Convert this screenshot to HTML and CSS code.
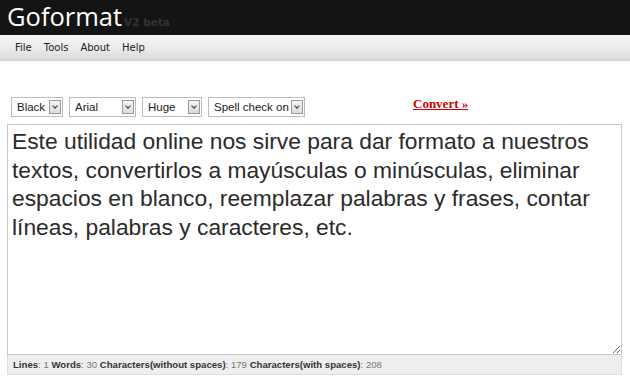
FILE: index.html
```html
<!DOCTYPE html>
<html lang="en">
<head>
    <meta charset="UTF-8">
    <title>Goformat</title>
    <link rel="stylesheet" href="styles.css">
</head>
<body>
    <div class="header">
        <span class="logo">Goformat</span>
        <span class="version">V2 beta</span>
    </div>

    <div class="menu">
        <a href="#">File</a>
        <a href="#">Tools</a>
        <a href="#">About</a>
        <a href="#">Help</a>
    </div>

    <div class="main">
        <div class="toolbar">
            <div class="select sel-color"><span>Black</span><span class="arrow"></span></div>
            <div class="select sel-font"><span>Arial</span><span class="arrow"></span></div>
            <div class="select sel-size"><span>Huge</span><span class="arrow"></span></div>
            <div class="select sel-spell"><span>Spell check on</span><span class="arrow"></span></div>
            <a href="#" class="convert">Convert &raquo;</a>
        </div>

        <textarea class="editor" spellcheck="false">Este utilidad online nos sirve para dar formato a nuestros textos, convertirlos a mayúsculas o minúsculas, eliminar espacios en blanco, reemplazar palabras y frases, contar líneas, palabras y caracteres, etc.</textarea>

        <div class="status">
            <b>Lines</b>: <span>1</span>
            <b>Words</b>: <span>30</span>
            <b>Characters(without spaces)</b>: <span>179</span>
            <b>Characters(with spaces)</b>: <span>208</span>
        </div>
    </div>
</body>
</html>
```

FILE: styles.css
```css
body {
    margin: 0;
    font-family: 'Liberation Sans', Arial, sans-serif;
    background: #fff;
    color: #333;
}

/* Header */
.header {
    height: 35px;
    background-color: #141414;
    padding-left: 7px;
    display: flex;
    align-items: flex-end;
    box-sizing: border-box;
    padding-bottom: 4px;
}

.logo {
    font-family: 'Open Sans', 'Segoe UI', sans-serif;
    font-size: 25.5px;
    line-height: 29px;
    color: #fff;
}

.version {
    font-family: 'DejaVu Sans', Verdana, sans-serif;
    font-size: 10.5px;
    font-weight: bold;
    color: #333;
    margin-left: 2px;
    margin-bottom: 3px;
}

/* Menu */
.menu {
    height: 26px;
    background: linear-gradient(to bottom, #f6f6f6, #e9e9e9 60%, #d9d9d9);
    border-bottom: 1px solid #d0d0d0;
    box-sizing: border-box;
    display: flex;
    align-items: center;
    padding-left: 15px;
    gap: 12px;
}

.menu a {
    font-family: 'DejaVu Sans', Tahoma, sans-serif;
    font-size: 10px;
    color: #222;
    text-decoration: none;
}

/* Toolbar */
.main {
    padding: 0 8px 0 7px;
}

.toolbar {
    display: flex;
    align-items: center;
    gap: 6px;
    margin-top: 36px;
    padding-left: 4px;
    height: 20px;
}

.select {
    height: 20px;
    box-sizing: border-box;
    border: 1px solid #bdbdbd;
    background: #fff;
    display: flex;
    align-items: center;
    justify-content: space-between;
    padding: 0 1px 0 5px;
    font-size: 11.5px;
    color: #222;
    white-space: nowrap;
}

.sel-color { width: 52px; }
.sel-font { width: 67px; }
.sel-size { width: 60px; }
.sel-spell { width: 97px; }

.arrow {
    flex-shrink: 0;
    width: 12px;
    height: 14px;
    box-sizing: border-box;
    border: 1px solid #9a9a9a;
    background: linear-gradient(to bottom, #f4f4f4, #dcdcdc);
    position: relative;
}

.arrow::after {
    content: "";
    position: absolute;
    left: 3px;
    top: 3px;
    width: 3px;
    height: 3px;
    border-right: 1.5px solid #333;
    border-bottom: 1.5px solid #333;
    transform: rotate(45deg);
}

.convert {
    margin-left: 102px;
    margin-top: -6px;
    font-family: 'Liberation Serif', 'Times New Roman', serif;
    font-size: 13px;
    font-weight: bold;
    color: #c00;
    white-space: nowrap;
}

/* Editor */
.editor {
    display: block;
    width: 100%;
    height: 231px;
    margin-top: 7px;
    box-sizing: border-box;
    border: 1px solid #c8c8c8;
    padding: 2px 4px;
    font-family: 'Liberation Sans', Arial, sans-serif;
    font-size: 22.8px;
    line-height: 28.5px;
    color: #2b2b2b;
    resize: vertical;
    outline: none;
}

/* Status bar */
.status {
    height: 20px;
    background: #eeeeee;
    border: 1px solid #dedede;
    border-top: none;
    box-sizing: border-box;
    font-size: 9.6px;
    color: #777;
    padding-left: 5px;
    line-height: 19px;
}

.status b {
    color: #333;
}
```
